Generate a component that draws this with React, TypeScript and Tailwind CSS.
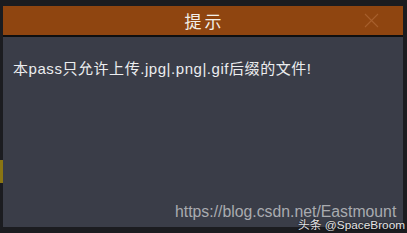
import React from "react";

export default function App() {
  return (
    <div className="w-[407px] h-[233px] bg-[#1b1c20] flex relative overflow-hidden" style={{ fontFamily: '"Liberation Sans", "Noto Sans CJK SC", sans-serif' }}>
      <div className="w-[3px] flex flex-col">
        <div className="mt-[160px] h-[23px] bg-[#8a7512]" />
      </div>
      <div className="mt-[6px] w-[400px] h-[221px] flex flex-col">
        <div className="h-[29px] bg-[#8f4510] flex items-center justify-center relative">
          <span className="text-[17px] leading-none text-[#f2efe9] tracking-[3px] pl-[3px]" style={{ fontFamily: '"Noto Sans CJK SC", sans-serif' }}>提示</span>
          <svg className="absolute right-[24px] top-[7px]" width="15" height="15" viewBox="0 0 15 15">
            <path d="M1 1 L14 14 M14 1 L1 14" stroke="#a75f2c" strokeWidth="1.1" />
          </svg>
        </div>
        <div className="h-[2px] bg-[#0f0f10]" />
        <div className="flex-1 bg-[#3a3d48] pl-[10px] pt-[23px]">
          <p className="text-[15px] leading-[17px] text-[#ecedef] tracking-[0.55px]" style={{ fontFamily: '"Liberation Sans", "Noto Sans CJK SC", sans-serif' }}>本pass只允许上传.jpg|.png|.gif后缀的文件!</p>
        </div>
      </div>
      <div className="absolute left-[175px] top-[202px] text-[15.8px] leading-[20px] text-[#a9abb0]">https://blog.csdn.net/Eastmount</div>
      <div className="absolute left-[298px] top-[218px] text-[11.8px] leading-[14px] text-[#e4e4e6] [text-shadow:0_0_2px_#000]" style={{ fontFamily: '"Liberation Sans", "Noto Sans CJK SC", sans-serif' }}>头条 @SpaceBroom</div>
    </div>
  );
}
